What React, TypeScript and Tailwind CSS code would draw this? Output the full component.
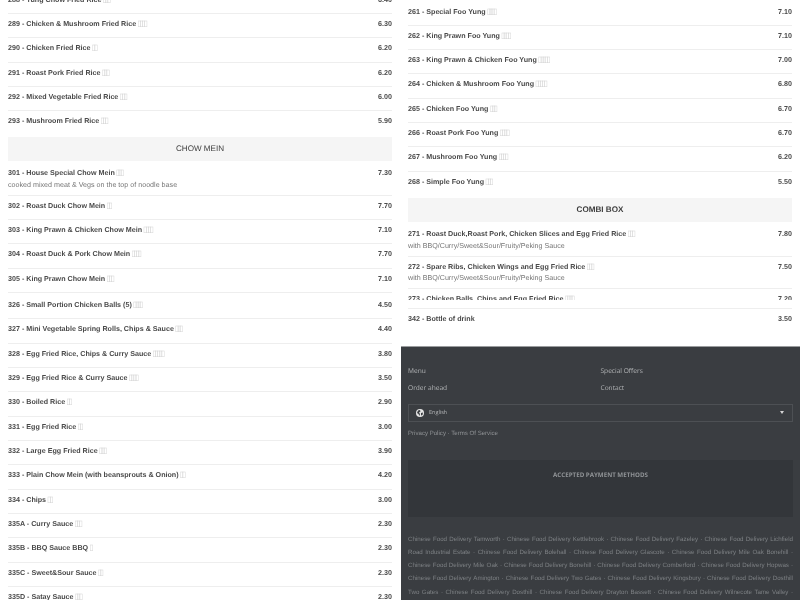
type Dish = { name: string; boxes: number; price: string; note?: string; flat?: boolean };

const leftTop: Dish[] = [
  { name: "288 - Yung Chow Fried Rice", boxes: 3, price: "6.40" },
  { name: "289 - Chicken & Mushroom Fried Rice", boxes: 4, price: "6.30" },
  { name: "290 - Chicken Fried Rice", boxes: 2, price: "6.20" },
  { name: "291 - Roast Pork Fried Rice", boxes: 3, price: "6.20" },
  { name: "292 - Mixed Vegetable Fried Rice", boxes: 3, price: "6.00" },
  { name: "293 - Mushroom Fried Rice", boxes: 3, price: "5.90", flat: true },
];

const chowMein: Dish[] = [
  { name: "301 - House Special Chow Mein", boxes: 3, price: "7.30", note: "cooked mixed meat & Vegs on the top of noodle base" },
  { name: "302 - Roast Duck Chow Mein", boxes: 2, price: "7.70" },
  { name: "303 - King Prawn & Chicken Chow Mein", boxes: 4, price: "7.10" },
  { name: "304 - Roast Duck & Pork Chow Mein", boxes: 4, price: "7.70" },
  { name: "305 - King Prawn Chow Mein", boxes: 3, price: "7.10" },
];

const sides: Dish[] = [
  { name: "326 - Small Portion Chicken Balls (5)", boxes: 4, price: "4.50" },
  { name: "327 - Mini Vegetable Spring Rolls, Chips & Sauce", boxes: 3, price: "4.40" },
  { name: "328 - Egg Fried Rice, Chips & Curry Sauce", boxes: 5, price: "3.80" },
  { name: "329 - Egg Fried Rice & Curry Sauce", boxes: 4, price: "3.50" },
  { name: "330 - Boiled Rice", boxes: 2, price: "2.90" },
  { name: "331 - Egg Fried Rice", boxes: 2, price: "3.00" },
  { name: "332 - Large Egg Fried Rice", boxes: 3, price: "3.90" },
  { name: "333 - Plain Chow Mein (with beansprouts & Onion)", boxes: 2, price: "4.20" },
  { name: "334 - Chips", boxes: 2, price: "3.00" },
  { name: "335A - Curry Sauce", boxes: 3, price: "2.30" },
  { name: "335B - BBQ Sauce BBQ", boxes: 1, price: "2.30" },
  { name: "335C - Sweet&Sour Sauce", boxes: 2, price: "2.30" },
  { name: "335D - Satay Sauce", boxes: 3, price: "2.30" },
];

const fooYung: Dish[] = [
  { name: "261 - Special Foo Yung", boxes: 4, price: "7.10" },
  { name: "262 - King Prawn Foo Yung", boxes: 4, price: "7.10" },
  { name: "263 - King Prawn & Chicken Foo Yung", boxes: 5, price: "7.00" },
  { name: "264 - Chicken & Mushroom Foo Yung", boxes: 5, price: "6.80" },
  { name: "265 - Chicken Foo Yung", boxes: 3, price: "6.70" },
  { name: "266 - Roast Pork Foo Yung", boxes: 4, price: "6.70" },
  { name: "267 - Mushroom Foo Yung", boxes: 4, price: "6.20" },
  { name: "268 - Simple Foo Yung", boxes: 3, price: "5.50", flat: true },
];

const combi: Dish[] = [
  { name: "271 - Roast Duck,Roast Pork, Chicken Slices and Egg Fried Rice", boxes: 3, price: "7.80", note: "with BBQ/Curry/Sweet&Sour/Fruity/Peking Sauce" },
  { name: "272 - Spare Ribs, Chicken Wings and Egg Fried Rice", boxes: 3, price: "7.50", note: "with BBQ/Curry/Sweet&Sour/Fruity/Peking Sauce" },
];

const towns = [
  "Tamworth", "Kettlebrook", "Fazeley", "Lichfield Road Industrial Estate", "Bolehall", "Glascote",
  "Mile Oak Bonehill", "Mile Oak", "Bonehill", "Comberford", "Hopwas", "Amington", "Two Gates",
  "Kingsbury", "Dosthill Two Gates", "Dosthill", "Drayton Bassett", "Wilnecote Tame Valley",
  "Wilnecote", "Hockley", "Dordon", "Polesworth",
];

function DishRow({ dish }: { dish: Dish }) {
  return (
    <div
      className={`flex justify-between pt-[5px] text-[7.15px] leading-[11.67px] ${dish.flat ? "" : "border-b border-[#eeeeee]"} ${dish.note ? "pb-[3.16px]" : "pb-[6.66px]"}`}
    >
      <div className="min-w-0 flex-1">
        <p className="font-bold text-[#4a4a4a]">
          {dish.name}{" "}
          {dish.boxes > 0 ? (
            <span className="-ml-px font-['DejaVu_Sans',sans-serif] text-[8px] leading-[0] font-normal tracking-[-2.3px] text-[#d6d6d6]">
              {"▯".repeat(dish.boxes)}
            </span>
          ) : null}
        </p>
        {dish.note ? <p className="text-[#777777]">{dish.note}</p> : null}
      </div>
      <span className="font-bold text-[#4a4a4a]">{dish.price}</span>
    </div>
  );
}

function SectionTitle({ label, bold }: { label: string; bold?: boolean }) {
  return (
    <div className={`flex h-6 items-center justify-center bg-[#f5f5f5] text-[#3c3c3c] ${bold ? "text-[8.1px] font-bold" : "text-[8.1px]"}`}>
      {label}
    </div>
  );
}

export default function App() {
  return (
    <div className="grid h-[600px] grid-cols-2 overflow-hidden bg-white font-['Liberation_Sans',Arial,sans-serif] blur-[0.3px] [text-rendering:geometricPrecision]">
      <div className="-mt-[10.2px] min-w-0 px-2">
        {leftTop.map((dish) => (
          <DishRow key={dish.name} dish={dish} />
        ))}
        <div className="mt-[2.2px]">
          <SectionTitle label="CHOW MEIN" />
        </div>
        <div className="mt-[2.2px]">
          {chowMein.map((dish) => (
            <DishRow key={dish.name} dish={dish} />
          ))}
        </div>
        <div className="mt-[2.2px]">
          {sides.map((dish) => (
            <DishRow key={dish.name} dish={dish} />
          ))}
        </div>
      </div>

      <div className="flex min-w-0 flex-col">
        <div className="px-2 pt-[1.5px]">
          {fooYung.map((dish) => (
            <DishRow key={dish.name} dish={dish} />
          ))}
          <div className="mt-[3.2px]">
            <SectionTitle label="COMBI BOX" bold />
          </div>
          <div className="mt-[1.7px]">
            {combi.map((dish) => (
              <DishRow key={dish.name} dish={dish} />
            ))}
          </div>
          <div className="h-[10.5px] overflow-hidden">
            <DishRow dish={{ name: "273 - Chicken Balls, Chips and Egg Fried Rice", boxes: 4, price: "7.20" }} />
          </div>
          <div className="mt-[8.9px] border-t border-[#eeeeee]">
            <DishRow dish={{ name: "342 - Bottle of drink", boxes: 0, price: "3.50", flat: true }} />
          </div>
        </div>

        <footer className="mt-[12.8px] ml-px flex-1 border-t border-[#9a9c9e] bg-[#3a3d41] px-[7px] pt-[18px] font-['Open_Sans',sans-serif] text-[6.6px] text-[#b4b6b8]">
          <div className="grid grid-cols-2 gap-y-[6.5px] leading-[11px]">
            <span>Menu</span>
            <span>Special Offers</span>
            <span>Order ahead</span>
            <span>Contact</span>
          </div>
          <div className="mt-[10.5px] flex h-[18px] items-center border border-[#4d5054] pr-[8px] pl-[7px] text-[5.5px]">
            <svg viewBox="0 0 16 16" className="mr-[5px] h-2 w-2">
              <circle cx="8" cy="8" r="8" fill="#e4e4e4" />
              <path d="M4 3l4-1 1 3-3 2 2 3-1 4-2-4-3-2zM10 8l4-1-1 5-3 1z" fill="#3a3d41" />
            </svg>
            <span>English</span>
            <span className="ml-auto h-0 w-0 border-x-[2.5px] border-t-[3px] border-x-transparent border-t-[#d5d5d5]" />
          </div>
          <p className="mt-[7px] font-['Liberation_Sans',sans-serif] text-[6.1px] leading-[10px] text-[#909396]">
            Privacy Policy · Terms Of Service
          </p>
          <div className="mt-[21px] flex h-[57px] justify-center bg-[#33363a] pt-[10.5px] text-[6.2px] leading-[10px] font-bold text-[#909396]">
            ACCEPTED PAYMENT METHODS
          </div>
          <p className="mt-[16.3px] text-justify font-['Liberation_Sans',sans-serif] text-[6.2px] leading-[13.2px] text-[#7d8084]">
            {towns.map((town) => `Chinese Food Delivery ${town}`).join(" · ")}
          </p>
        </footer>
      </div>
    </div>
  );
}
